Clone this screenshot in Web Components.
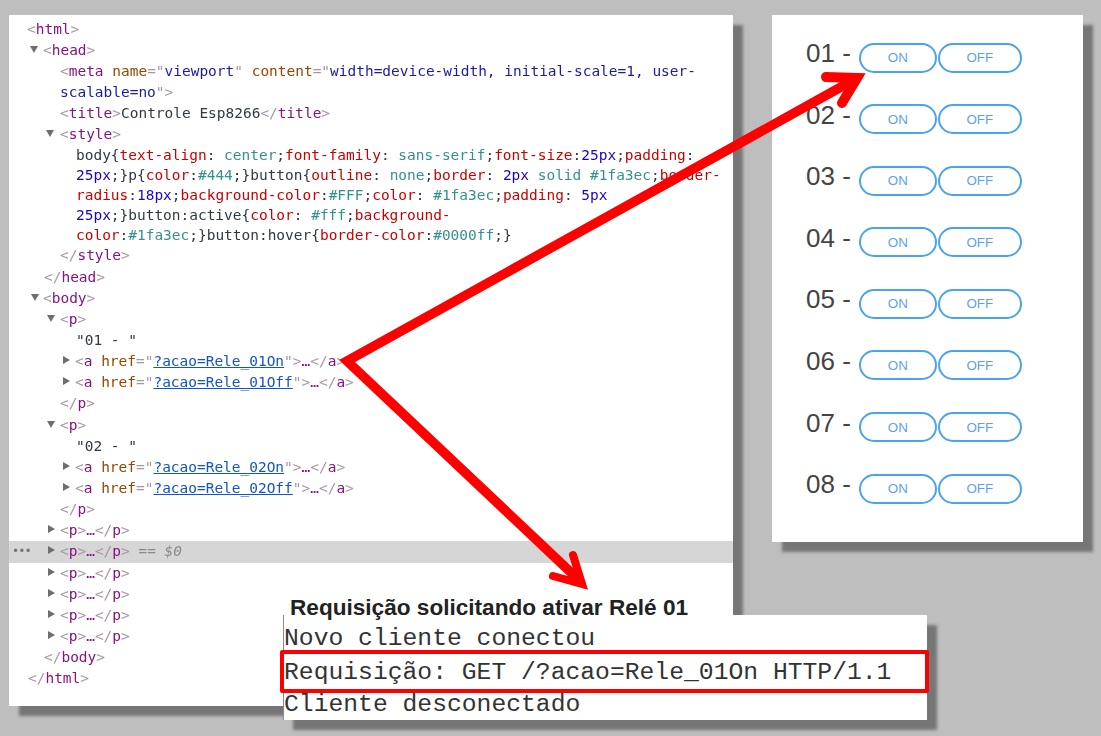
<!DOCTYPE html>
<html lang="pt">
<head>
<meta charset="utf-8">
<title>Controle Esp8266</title>
<style>
  html, body { margin: 0; padding: 0; }
  body { width: 1101px; height: 736px; overflow: hidden; background: #bebebe; }
</style>
</head>
<body>
<x-desktop>
  <x-dom-panel></x-dom-panel>
  <x-relay-panel>
    <x-relay-row num="01"></x-relay-row>
    <x-relay-row num="02"></x-relay-row>
    <x-relay-row num="03"></x-relay-row>
    <x-relay-row num="04"></x-relay-row>
    <x-relay-row num="05"></x-relay-row>
    <x-relay-row num="06"></x-relay-row>
    <x-relay-row num="07"></x-relay-row>
    <x-relay-row num="08"></x-relay-row>
  </x-relay-panel>
  <x-arrows></x-arrows>
  <x-serial-panel></x-serial-panel>
</x-desktop>

<template id="dom-panel-tpl">
  <style>
    :host {
      position: absolute; left: 9px; top: 15px; width: 724px; height: 691px;
      background: #fff; box-shadow: 10px 10px 3px #767676;
      font: 14.47px/21.15px "DejaVu Sans Mono", monospace; color: #303942;
    }
    .tree { padding-top: 3.6px; filter: blur(.3px); }
    .l { height: 21.15px; position: relative; white-space: pre; }
    .w { height: 20px; line-height: 20px; }
    .sel { background: #d6d6d6; }
    .b { color: #a894a6; }
    .t { color: #881280; }
    .n { color: #994500; }
    .v { color: #1a1aa6; }
    .a { color: #1155cc; text-decoration: underline; }
    .p { color: #c80000; }
    .c { color: #368f8f; }
    .u { color: #1c00cf; }
    .m { color: #8a8a8a; font-style: italic; }
    .dots { position: absolute; left: 3px; top: 0; color: #777; font-size: 12px; letter-spacing: -1px; }
    .open, .shut { position: absolute; width: 0; height: 0; }
    .open { top: 6px; border-left: 4.5px solid transparent; border-right: 4.5px solid transparent; border-top: 7px solid #6e6e6e; }
    .shut { top: 5px; border-top: 4.5px solid transparent; border-bottom: 4.5px solid transparent; border-left: 7px solid #6e6e6e; }
    .l > span.x { position: absolute; top: 0; }
  </style>
  <div class="tree" id="tree"></div>
</template>

<template id="relay-panel-tpl">
  <style>
    :host {
      position: absolute; left: 772px; top: 15px; width: 311px; height: 527px;
      box-sizing: border-box; padding: 23px 0 0 34px;
      background: #fff; box-shadow: 10px 10px 3px #767676;
      display: flex; flex-direction: column;
    }
  </style>
  <slot></slot>
</template>

<template id="relay-row-tpl">
  <style>
    :host {
      display: flex; align-items: baseline; height: 61.6px;
      font: 26px/30px "Liberation Sans", Arial, sans-serif; color: #444;
    }
    .num { margin-right: 8px; white-space: pre; }
    button {
      box-sizing: border-box; height: 30px; padding: 0; margin: 0 1px 0 0;
      border: 2px solid #4aa4ea; border-radius: 15px; background: #fff; color: #5ba2ec;
      font: 13.33px "Liberation Sans", Arial, sans-serif;
    }
    .on { width: 78px; }
    .off { width: 84px; }
  </style>
  <span class="num"></span><button class="on">ON</button><button class="off">OFF</button>
</template>

<template id="arrows-tpl">
  <style>
    :host { position: absolute; left: 0; top: 0; width: 1101px; height: 736px; pointer-events: none; }
    svg { display: block; }
  </style>
  <svg width="1101" height="736" viewBox="0 0 1101 736" fill="none" stroke="#ff0000">
    <polyline points="850,82 347,361 580,581" stroke-width="9.5" stroke-miterlimit="6"/>
    <polyline points="826,77 857,78 842,103" stroke-width="10" stroke-linecap="round" stroke-miterlimit="8"/>
    <polyline points="553,576 582,584 573,555" stroke-width="8" stroke-linecap="round" stroke-miterlimit="8"/>
  </svg>
</template>

<template id="serial-panel-tpl">
  <style>
    :host { position: absolute; left: 283px; top: 597px; width: 644px; display: block; }
    .cap {
      height: 18px; padding-left: 7px; white-space: nowrap;
      font: bold 22.6px/22px "Liberation Sans", Arial, sans-serif; color: #222;
    }
    .box {
      height: 105px; box-sizing: border-box; padding-top: 7px;
      background: #fff; border-left: 1px solid #8a8a8a; box-shadow: 10px 10px 3px #767676;
      font: 24.7px/33px "Liberation Mono", "Courier New", monospace; color: #333;
    }
    .row { height: 33px; position: relative; white-space: pre; }
    .hit { line-height: 35px; }
    .hit::after {
      content: ""; position: absolute; left: -4px; right: -2px; top: -5px; bottom: -5px;
      border: 4px solid #ff0000; border-radius: 2px; pointer-events: none;
    }
  </style>
  <div class="cap">Requisição solicitando ativar Relé 01</div>
  <div class="box">
    <div class="row">Novo cliente conectou</div>
    <div class="row hit">Requisição: GET /?acao=Rele_01On HTTP/1.1</div>
    <div class="row">Cliente desconectado</div>
  </div>
</template>

<script>
function mount(el, id) {
  const root = el.attachShadow({ mode: "open" });
  root.appendChild(document.getElementById(id).content.cloneNode(true));
  return root;
}

// small helpers for the elements panel markup
const open = (t, rest = "") => `<span class="b">&lt;</span><span class="t">${t}</span>${rest}<span class="b">&gt;</span>`;
const close = (t) => `<span class="b">&lt;/</span><span class="t">${t}</span><span class="b">&gt;</span>`;
const dots = `<span class="t">…</span>`;
const link = (href) => open("a", ` <span class="n">href</span><span class="b">="</span><span class="a">${href}</span><span class="b">"</span>`) + dots + close("a");
const p = (s) => `<span class="p">${s}</span>`;
const c = (s) => `<span class="c">${s}</span>`;
const u = (s) => `<span class="u">${s}</span>`;

// [left of text, markup, arrow ("open"/"shut"), arrow left, extra class]
const LINES = [
  [18, open("html")],
  [34, open("head"), "open", 21],
  [51, open("meta", ` <span class="n">name</span><span class="b">="</span><span class="v">viewport</span><span class="b">"</span> <span class="n">content</span><span class="b">="</span><span class="v">width=device-width, initial-scale=1, user-</span>`).replace(/<span class="b">&gt;<\/span>$/, "")],
  [51, `<span class="v">scalable=no</span><span class="b">"&gt;</span>`],
  [51, open("title") + "Controle Esp8266" + close("title")],
  [51, open("style"), "open", 37],
  [67, `body{${p("text-align")}: ${c("center")};${p("font-family")}: ${c("sans-serif")};${p("font-size")}:${u("25px")};${p("padding")}:`, null, 0, "w"],
  [67, `${u("25px")};}p{${p("color")}:${c("#444")};}button{${p("outline")}: ${c("none")};${p("border")}: ${u("2px")} ${c("solid")} ${c("#1fa3ec")};${p("border-")}`, null, 0, "w"],
  [67, `${p("radius")}:${u("18px")};${p("background-color")}:${c("#FFF")};${p("color")}: ${c("#1fa3ec")};${p("padding")}: ${u("5px")}`, null, 0, "w"],
  [67, `${u("25px")};}button:active{${p("color")}: ${c("#fff")};${p("background-")}`, null, 0, "w"],
  [67, `${p("color")}:${c("#1fa3ec")};}button:hover{${p("border-color")}:${c("#0000ff")};}`, null, 0, "w"],
  [51, close("style")],
  [35, close("head")],
  [34, open("body"), "open", 22],
  [51, open("p"), "open", 38],
  [67, `"01 - "`],
  [66, link("?acao=Rele_01On"), "shut", 54],
  [66, link("?acao=Rele_01Off"), "shut", 54],
  [51, close("p")],
  [51, open("p"), "open", 38],
  [67, `"02 - "`],
  [66, link("?acao=Rele_02On"), "shut", 54],
  [66, link("?acao=Rele_02Off"), "shut", 54],
  [51, close("p")],
  [51, open("p") + dots + close("p"), "shut", 39],
  [51, open("p") + dots + close("p") + ` <span class="m">== $0</span>`, "shut", 39, "sel"],
  [51, open("p") + dots + close("p"), "shut", 39],
  [51, open("p") + dots + close("p"), "shut", 39],
  [51, open("p") + dots + close("p"), "shut", 39],
  [51, open("p") + dots + close("p"), "shut", 39],
  [35, close("body")],
  [19, close("html")],
];

class XDesktop extends HTMLElement {
  constructor() {
    super();
    this.attachShadow({ mode: "open" }).innerHTML = `
      <style>:host { display: block; position: relative; width: 1101px; height: 736px; overflow: hidden; }</style>
      <slot></slot>`;
  }
}

class XDomPanel extends HTMLElement {
  constructor() {
    super();
    const root = mount(this, "dom-panel-tpl");
    root.getElementById("tree").innerHTML = LINES.map(([x, html, arrow, ax, cls]) => `
      <div class="l ${cls || ""}">${cls === "sel" ? `<span class="dots">•••</span>` : ""}${arrow ? `<span class="${arrow}" style="left:${ax}px"></span>` : ""}<span class="x" style="left:${x}px">${html}</span></div>`).join("");
  }
}

class XRelayPanel extends HTMLElement {
  constructor() {
    super();
    mount(this, "relay-panel-tpl");
  }
}

class XRelayRow extends HTMLElement {
  constructor() {
    super();
    this.root = mount(this, "relay-row-tpl");
  }
  connectedCallback() {
    this.root.querySelector(".num").textContent = this.getAttribute("num") + " -";
  }
}

class XArrows extends HTMLElement {
  constructor() {
    super();
    mount(this, "arrows-tpl");
  }
}

class XSerialPanel extends HTMLElement {
  constructor() {
    super();
    mount(this, "serial-panel-tpl");
  }
}

customElements.define("x-desktop", XDesktop);
customElements.define("x-dom-panel", XDomPanel);
customElements.define("x-relay-panel", XRelayPanel);
customElements.define("x-relay-row", XRelayRow);
customElements.define("x-arrows", XArrows);
customElements.define("x-serial-panel", XSerialPanel);
</script>
</body>
</html>
